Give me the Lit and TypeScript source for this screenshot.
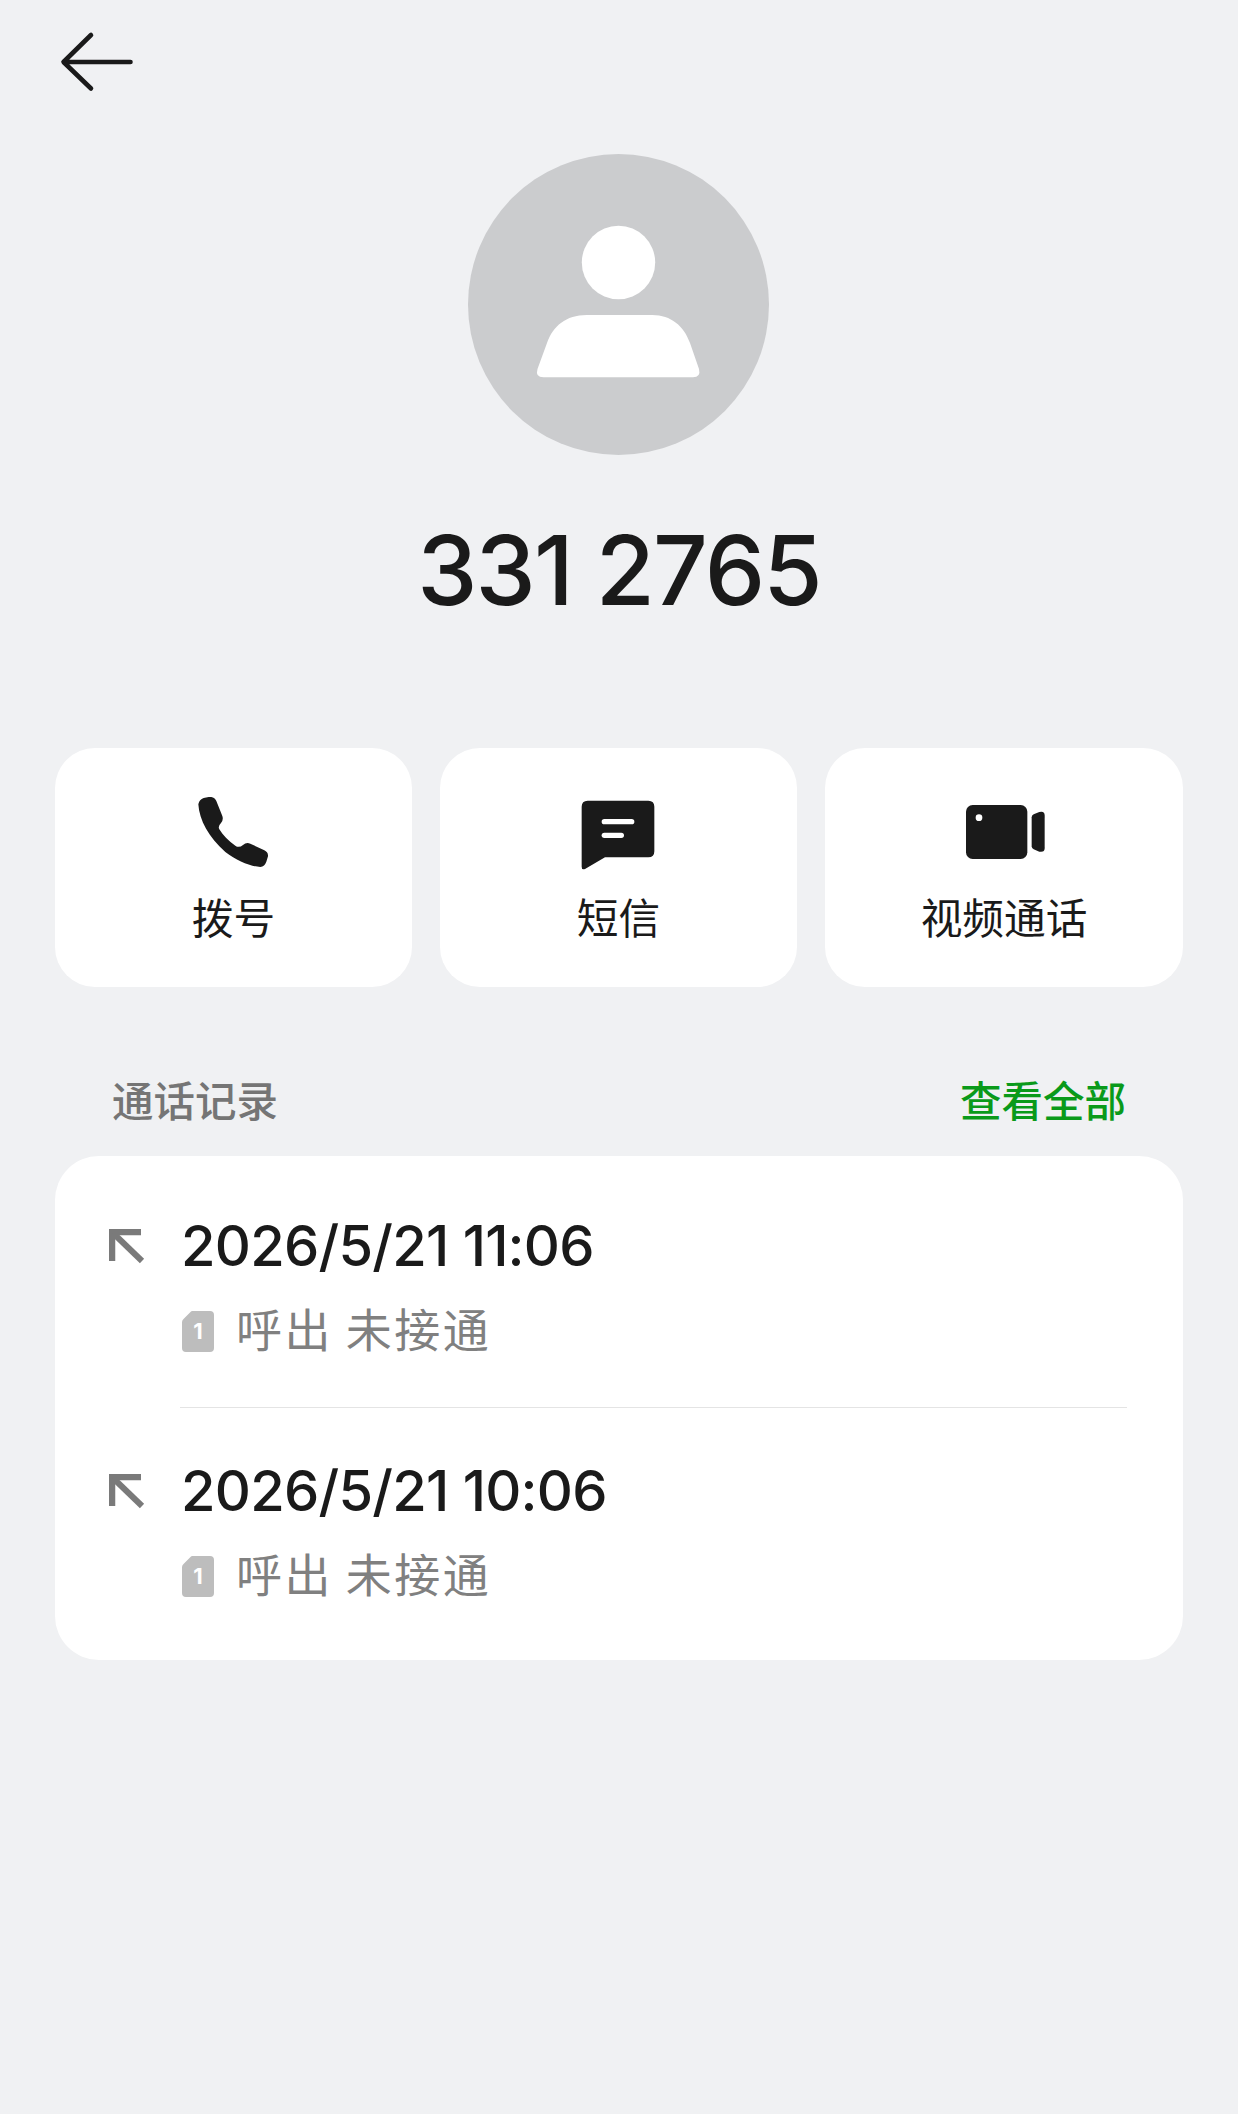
import { LitElement, html, css, svg } from "lit";
import { customElement } from "lit/decorators.js";

const calls = ["2026/5/21 11:06", "2026/5/21 10:06"];

@customElement("app-root")
export class AppRoot extends LitElement {
  static styles = css`
    :host {
      display: block;
      width: 1238px;
      min-height: 2114px;
      background: #f0f1f3;
      font-family: "Inter", "Noto Sans CJK SC", sans-serif;
      color: #1a1a1a;
    }
    .top { height: 154px; display: flex; padding: 30px 0 0 59px; box-sizing: border-box; }
    .back { width: 78px; height: 64px; display: block; }
    .avatar { display: block; width: 301px; height: 301px; margin-right: 1px; }
    .hero { display: flex; flex-direction: column; align-items: center; }
    .title { margin-top: 65px; height: 100px; line-height: 100px; font-size: 96px; font-weight: 500; letter-spacing: -1.8px; }
    .actions { display: grid; grid-template-columns: 357px 357px 358px; gap: 28px; padding: 0 55px; margin-top: 128px; }
    .action { height: 239px; background: #fff; border-radius: 40px; display: flex; flex-direction: column; align-items: center; box-sizing: border-box; padding-top: 47px; }
    .ico { height: 76px; display: flex; align-items: center; justify-content: center; }
    .ico svg { display: block; }
    .ico .phone { margin: 0 2px 3px 0; }
    .ico .message { margin: 3px 1px 0 0; }
    .ico .video { margin: 0 0 2px 2px; }
    .label { margin-top: 15px; height: 60px; line-height: 60px; font-size: 41.7px; font-family: "Noto Sans CJK SC", sans-serif; }
    .sec { display: flex; justify-content: space-between; padding: 0 112px; margin-top: 82px; margin-bottom: 27px; height: 60px; line-height: 60px; font-size: 41.5px; font-weight: 500; font-family: "Noto Sans CJK SC", sans-serif; color: #757575; }
    .sec .all { color: #0a9a1a; }
    .list { margin: 0 55px; background: #fff; border-radius: 44px; padding: 7px 56px 8px 0; }
    .row { display: grid; grid-template-columns: 126px 1fr; padding: 50px 0 46px; }
    .dir { padding: 16px 0 0 54px; }
    .dir svg { display: block; }
    .time { height: 64px; line-height: 66px; font-size: 56px; font-weight: 500; letter-spacing: -0.75px; }
    .sub { grid-column: 2; margin-top: 24px; height: 60px; display: flex; align-items: center; font-size: 46px; letter-spacing: 2.5px; font-family: "Noto Sans CJK SC", sans-serif; color: #808080; }
    .sub-text { align-self: flex-start; line-height: 53px; }
    .sim { width: 32px; height: 41px; position: relative; margin: 0 22px 0 1px; flex: none; }
    .sim svg { display: block; position: absolute; inset: 0; }
    .sim span { position: absolute; inset: 0; display: flex; align-items: center; justify-content: center; color: #fff; font: 700 22px/41px "Inter", sans-serif; letter-spacing: 0; }
    .divider { height: 1px; background: #e4e4e4; margin-left: 125px; }
  `;

  private phone() {
    return html`<svg class="phone" width="70" height="70" viewBox="473 200 210 210"><path fill="#1a1a1a" d="M490 203 Q477 207 474 222 C477 270 505 320 555 365 C590 392 630 408 660 410 Q673 408 678 394 L683 378 Q684 366 672 360 L630 340 Q618 335 608 344 Q596 354 585 346 C565 333 548 315 537 297 Q532 288 542 278 Q550 268 546 257 L528 212 Q522 198 505 200 Z"/></svg>`;
  }
  private message() {
    return html`<svg class="message" width="74" height="70" viewBox="453 208 222 210"><path fill="#1a1a1a" d="M473 210 H655 Q673 210 673 228 V362 Q673 380 655 380 H525 L465 415 Q455 419 455 408 V228 Q455 210 473 210 Z"/><rect x="515" y="265" width="98" height="16" rx="8" fill="#fff"/><rect x="515" y="306" width="67" height="16" rx="8" fill="#fff"/></svg>`;
  }
  private video() {
    return html`<svg class="video" width="79" height="54" viewBox="468 225 237 162"><rect x="468" y="225" width="184" height="162" rx="20" fill="#1a1a1a"/><circle cx="507" cy="263" r="10" fill="#fff"/><path fill="#1a1a1a" d="M665 262 Q665 256 671 253 L688 246 Q704 242 704 256 V355 Q704 368 688 365 L671 358 Q665 355 665 349 Z"/></svg>`;
  }

  private row(t: string) {
    return html`<div class="row">
      <div class="dir"><svg width="36" height="36" viewBox="0 0 36 36"><path d="M3 32 V3 H32" fill="none" stroke="#7a7a7a" stroke-width="6.5"/><path d="M4 4 L33 32" fill="none" stroke="#7a7a7a" stroke-width="6"/></svg></div>
      <div class="time">${t}</div>
      <div class="sub"><span class="sim"><svg width="32" height="41" viewBox="0 0 32 41"><path fill="#bdbdbd" d="M10 0 H28 Q32 0 32 4 V37 Q32 41 28 41 H4 Q0 41 0 37 V11 Q0 9 2 7.5 L8 1.5 Q9 0 10 0 Z"/></svg><span>1</span></span><span class="sub-text">呼出 未接通</span></div>
    </div>`;
  }

  render() {
    const actions = [
      { icon: this.phone(), label: "拨号" },
      { icon: this.message(), label: "短信" },
      { icon: this.video(), label: "视频通话" },
    ];
    return html`
      <div class="top">
        <svg class="back" viewBox="0 0 78 64">${svg`<path d="M32 5 L4.5 32 L32 58.5 M5 32 H71.5" fill="none" stroke="#1a1a1a" stroke-width="4.6" stroke-linecap="round" stroke-linejoin="round"/>`}</svg>
      </div>
      <div class="hero">
        <svg class="avatar" viewBox="0 0 301 301">
          <circle cx="150.5" cy="150.5" r="150.5" fill="#cbccce"/>
          <circle cx="150.5" cy="108.5" r="36.7" fill="#fff"/>
          <path fill="#fff" d="M118.7 161 H184.3 C203 161 216 172 222 189 L231 215 Q233 223.3 225 223.3 H75.5 Q67 223.3 69.5 215 L79 189 C85 172 98 161 118.7 161 Z"/>
        </svg>
        <div class="title">331 2765</div>
      </div>
      <div class="actions">
        ${actions.map((a) => html`<div class="action"><div class="ico">${a.icon}</div><div class="label">${a.label}</div></div>`)}
      </div>
      <div class="sec"><span>通话记录</span><span class="all">查看全部</span></div>
      <div class="list">
        ${this.row(calls[0])}
        <div class="divider"></div>
        ${this.row(calls[1])}
      </div>
    `;
  }
}
